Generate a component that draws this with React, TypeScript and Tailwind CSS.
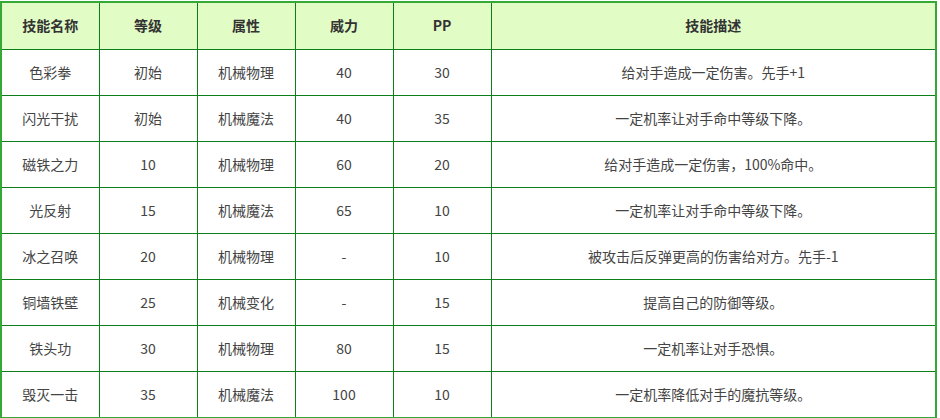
const skills = [
  { name: '色彩拳', level: '初始', type: '机械物理', power: '40', pp: '30', desc: '给对手造成一定伤害。先手+1' },
  { name: '闪光干扰', level: '初始', type: '机械魔法', power: '40', pp: '35', desc: '一定机率让对手命中等级下降。' },
  { name: '磁铁之力', level: '10', type: '机械物理', power: '60', pp: '20', desc: '给对手造成一定伤害，100%命中。' },
  { name: '光反射', level: '15', type: '机械魔法', power: '65', pp: '10', desc: '一定机率让对手命中等级下降。' },
  { name: '冰之召唤', level: '20', type: '机械物理', power: '-', pp: '10', desc: '被攻击后反弹更高的伤害给对方。先手-1' },
  { name: '铜墙铁壁', level: '25', type: '机械变化', power: '-', pp: '15', desc: '提高自己的防御等级。' },
  { name: '铁头功', level: '30', type: '机械物理', power: '80', pp: '15', desc: '一定机率让对手恐惧。' },
  { name: '毁灭一击', level: '35', type: '机械魔法', power: '100', pp: '10', desc: '一定机率降低对手的魔抗等级。' },
];

const headers = ['技能名称', '等级', '属性', '威力', 'PP', '技能描述'];

export default function App() {
  return (
    <div className="w-[940px] h-[418px] bg-white pt-px font-['Microsoft_YaHei','Noto_Sans_CJK_SC',sans-serif] text-[14px]">
      <div className="w-[937px] border-2 border-[#35a835]">
        <table className="w-full border-collapse border-hidden table-fixed">
          <colgroup>
            <col className="w-[97px]" />
            <col className="w-[98px]" />
            <col className="w-[98px]" />
            <col className="w-[98px]" />
            <col className="w-[98px]" />
            <col />
          </colgroup>
          <thead>
            <tr className="h-[46px] bg-[#e2fcc5]">
              {headers.map((h) => (
                <th key={h} className="border border-[#0a7f1a] text-center font-bold text-[#333]">
                  {h}
                </th>
              ))}
            </tr>
          </thead>
          <tbody>
            {skills.map((s) => (
              <tr key={s.name} className="h-[46px] text-[#444]">
                <td className="border border-[#0a7f1a] text-center">{s.name}</td>
                <td className="border border-[#0a7f1a] text-center">{s.level}</td>
                <td className="border border-[#0a7f1a] text-center">{s.type}</td>
                <td className="border border-[#0a7f1a] text-center">{s.power}</td>
                <td className="border border-[#0a7f1a] text-center">{s.pp}</td>
                <td className="border border-[#0a7f1a] text-center">{s.desc}</td>
              </tr>
            ))}
          </tbody>
        </table>
      </div>
    </div>
  );
}
